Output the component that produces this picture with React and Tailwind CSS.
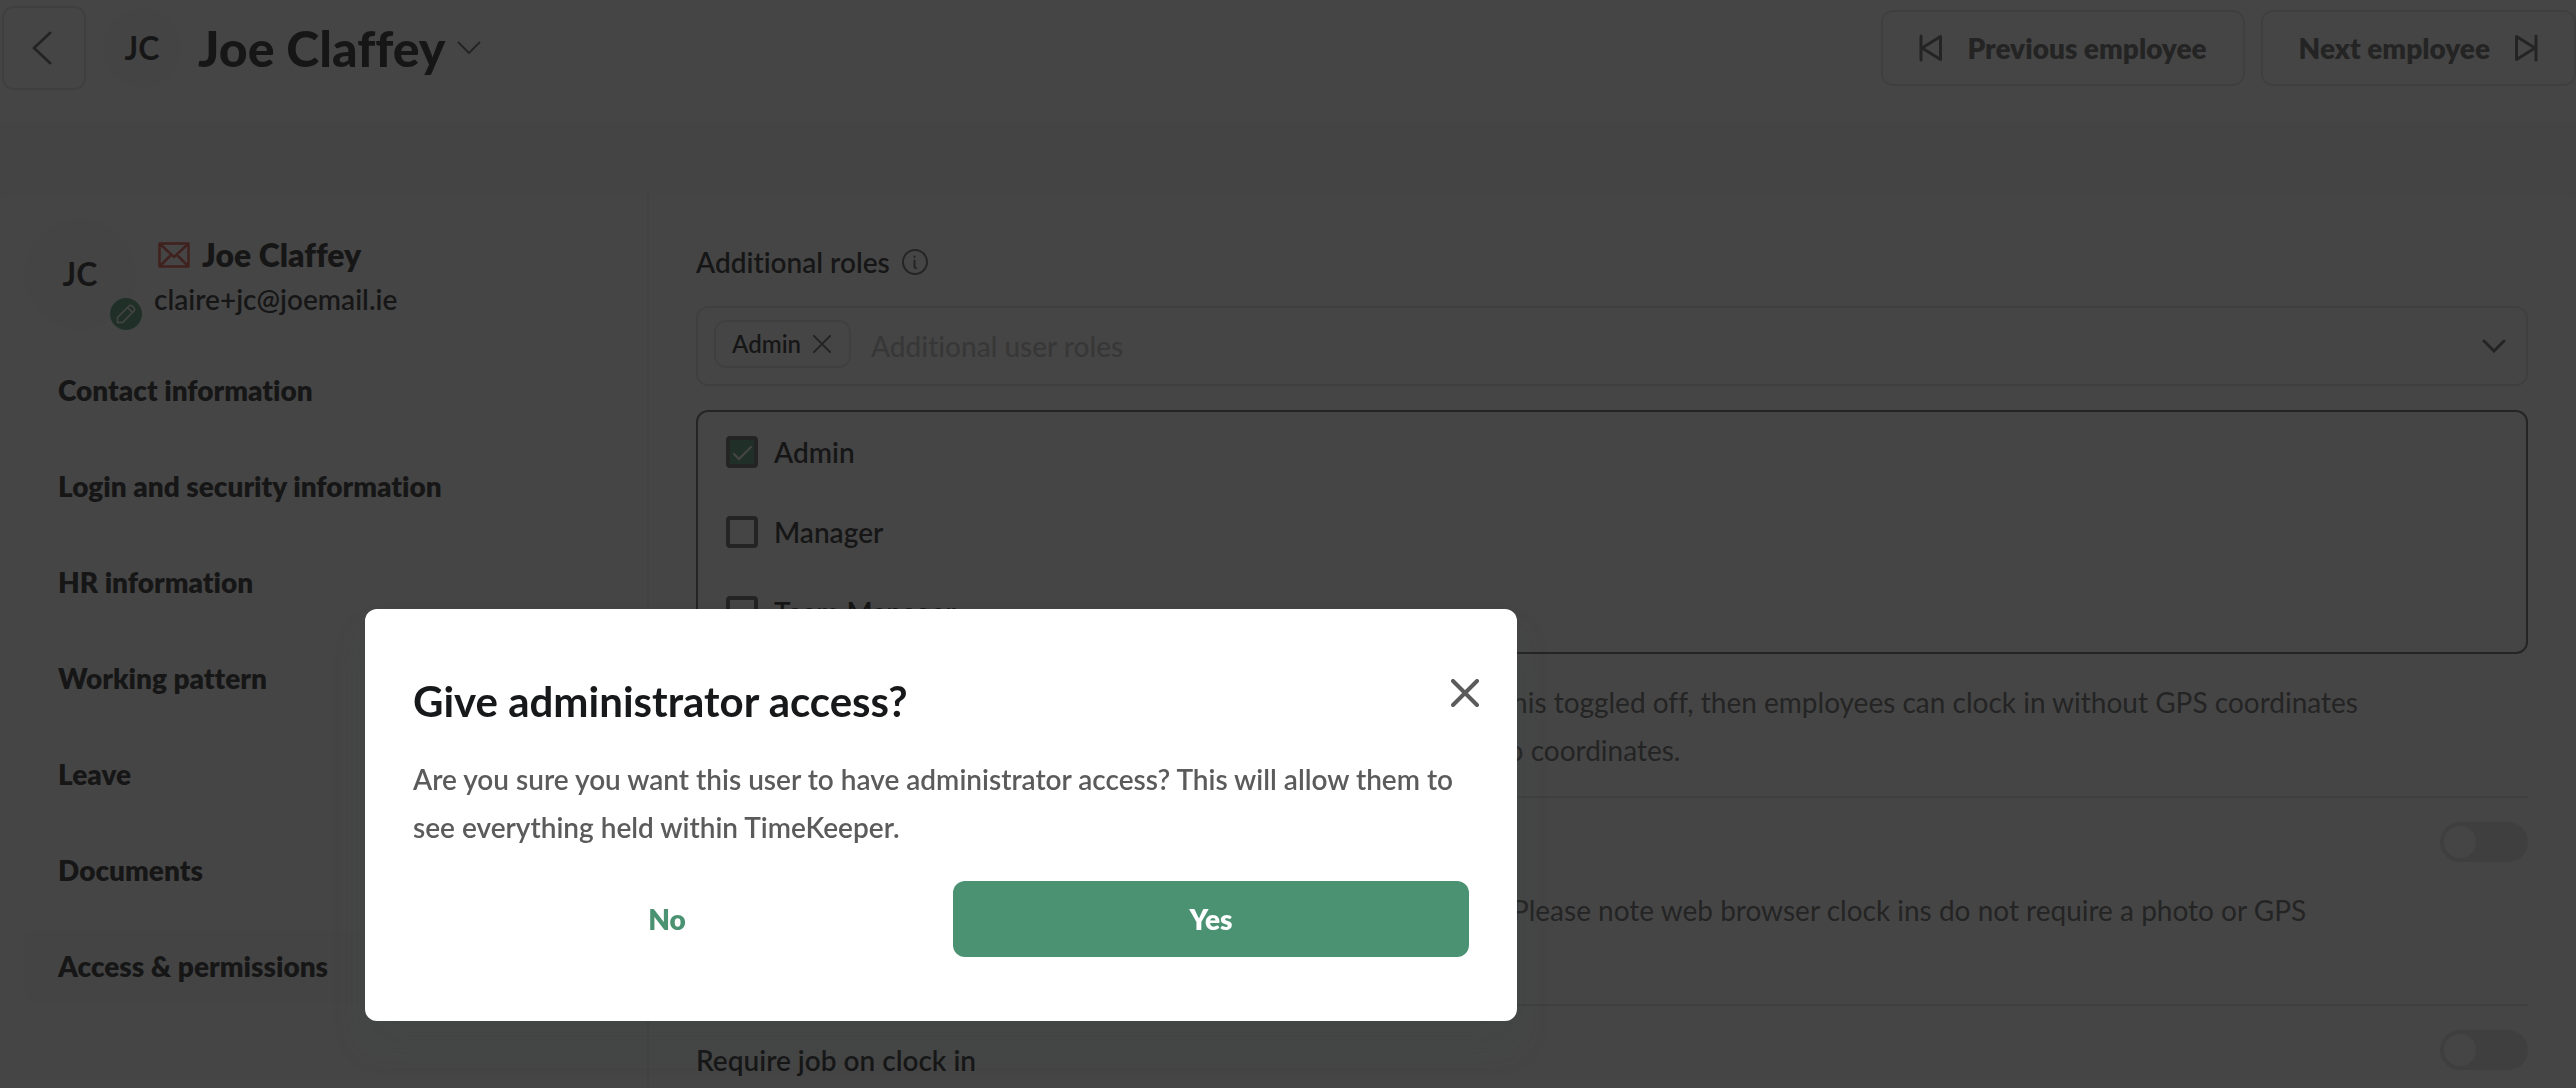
import React, { useState } from 'react';

const navItems = [
  'Contact information',
  'Login and security information',
  'HR information',
  'Working pattern',
  'Leave',
  'Documents',
  'Access & permissions',
];

const roles = ['Admin', 'Manager', 'Team Manager'];

function SkipIcon({ className }) {
  return (
    <svg className={className} width="24" height="28" viewBox="0 0 24 28" fill="none" stroke="currentColor" strokeWidth="3" strokeLinecap="round" strokeLinejoin="round">
      <path d="M2 2v24M21.500 2.500v23L3 14z" />
    </svg>
  );
}

function Header() {
  return (
    <header className="flex h-[123px] items-start justify-between bg-white pl-[2px]">
      <div className="flex items-center pt-[6px]">
        <button type="button" aria-label="Back" className="flex h-[84px] w-[84px] items-center justify-center rounded-xl border-2 border-[#e0e0e0] pr-1 text-[#5b5b5b]">
          <svg width="20" height="44" viewBox="0 0 20 44" fill="none" stroke="currentColor" strokeWidth="3" strokeLinecap="round" strokeLinejoin="round">
            <path d="M18 7L2 22l16 15" />
          </svg>
        </button>
        <div className="ml-4 flex size-20 items-center justify-center rounded-full bg-[#fafafa] text-[32px] font-bold">JC</div>
        <h1 className="ml-4 text-[50px] leading-[60px] font-black">Joe Claffey</h1>
        <button type="button" aria-label="Switch employee" className="ml-3 text-[#5b5b5b]">
          <svg width="24" height="14" viewBox="0 0 24 14" fill="none" stroke="currentColor" strokeWidth="2">
            <path d="M1 1l11 11L23 1" />
          </svg>
        </button>
      </div>
      <div className="flex gap-4 pt-[10px]">
        <button type="button" className="flex h-[76px] items-center gap-6 rounded-xl border-2 border-[#e0e0e0] px-9 font-extrabold text-[#5b5b5b]">
          <SkipIcon />
          Previous employee
        </button>
        <button type="button" className="flex h-[76px] items-center gap-6 rounded-xl border-2 border-[#e0e0e0] px-9 font-extrabold text-[#5b5b5b]">
          Next employee
          <SkipIcon className="rotate-180" />
        </button>
      </div>
    </header>
  );
}

function Sidebar() {
  return (
    <aside className="w-[649px] shrink-0 border-r-2 border-[#e8e8e8] px-6 pt-6">
      <div className="flex h-28 items-center">
        <div className="relative flex size-28 items-center justify-center rounded-full bg-[#fafafa] text-[32px] font-bold">
          JC
          <button type="button" aria-label="Edit photo" className="absolute right-[-6px] bottom-0 flex size-8 items-center justify-center rounded-full bg-[#4b9272] text-white">
            <svg width="20" height="20" viewBox="0 0 20 20" fill="none" stroke="currentColor" strokeWidth="1.500" strokeLinejoin="round">
              <path d="M1.500 18.500v-5L13 2q1.500-1.500 3 0l2 2q1.500 1.500 0 3L6.500 18.500zM11.500 3.500l5 5" />
            </svg>
          </button>
        </div>
        <div className="pt-[6px] pl-[18px]">
          <p className="flex items-center gap-3 pl-1 text-[32px] leading-[44px] font-extrabold">
            <svg width="32" height="26" viewBox="0 0 32 26" fill="none" stroke="#e04a3c" strokeWidth="2.500" strokeLinejoin="round">
              <path d="M1.500 1.500h29v23h-29zM2 2l14 13L30 2M2 24l11-11M30 24L19 13" />
            </svg>
            Joe Claffey
          </p>
          <p className="leading-[44px]">claire+jc@joemail.ie</p>
        </div>
      </div>
      <nav className="mt-6 flex flex-col gap-6 font-extrabold">
        {navItems.map((item) => (
          <a
            key={item}
            href="#"
            className={`flex h-[72px] items-center rounded-xl px-[34px] ${item === 'Access & permissions' ? 'bg-[#fafafa]' : ''}`}
          >
            {item}
          </a>
        ))}
      </nav>
    </aside>
  );
}

function Toggle({ label }) {
  return (
    <label className="relative block h-10 w-[88px] shrink-0">
      <input type="checkbox" role="switch" aria-label={label} className="peer size-full appearance-none rounded-full bg-[#e0e0e0]" />
      <span className="absolute top-1 left-1 size-8 rounded-full bg-white peer-checked:left-[52px]" />
    </label>
  );
}

function Permissions() {
  const [selected, setSelected] = useState(['Admin']);

  const toggleRole = (role) =>
    setSelected((prev) => (prev.includes(role) ? prev.filter((r) => r !== role) : [...prev, role]));

  return (
    <main className="flex-1 pt-11 pr-12 pl-[47px]">
      <div className="flex h-12 items-center gap-3">
        <label htmlFor="roles">Additional roles</label>
        <svg width="26" height="26" viewBox="0 0 26 26" fill="none" stroke="#5b5b5b" strokeWidth="2" strokeLinecap="round">
          <circle cx="13" cy="13" r="12" />
          <path d="M12.500 11.500v6q0 1.500 1.500 1.500M12.500 7.500v.5" />
        </svg>
      </div>

      {/* role picker */}
      <div className="mt-5 flex h-20 items-center rounded-xl border-2 border-[#e0e0e0] pr-5 pl-4">
        {selected.includes('Admin') && (
          <span className="mb-1 flex h-12 shrink-0 items-center gap-3 rounded-xl border-2 border-[#e0e0e0] pr-[18px] pl-4 text-2xl">
            Admin
            <button type="button" aria-label="Remove Admin" onClick={() => toggleRole('Admin')}>
              <svg width="18" height="18" viewBox="0 0 18 18" stroke="#5b5b5b" strokeWidth="2" strokeLinecap="round">
                <path d="M1 1l16 16M17 1L1 17" />
              </svg>
            </button>
          </span>
        )}
        <input id="roles" type="text" placeholder="Additional user roles" className="ml-5 min-w-0 flex-1 font-medium outline-none placeholder:text-[#b8b8b8]" />
        <button type="button" aria-label="Show roles">
          <svg width="24" height="14" viewBox="0 0 24 14" fill="none" stroke="#5b5b5b" strokeWidth="3" strokeLinecap="round">
            <path d="M2 2l10 10L22 2" />
          </svg>
        </button>
      </div>

      <div className="mt-6 h-[244px] overflow-hidden rounded-xl border-2 border-[#5b5b5b] px-7">
        {roles.map((role) => (
          <label key={role} className="flex h-20 items-center gap-4">
            <span className="relative block size-8">
              <input
                type="checkbox"
                checked={selected.includes(role)}
                onChange={() => toggleRole(role)}
                className="block size-8 appearance-none rounded-sm border-4 border-[#5b5b5b] checked:bg-[#4b9272]"
              />
              {selected.includes(role) && (
                <svg className="pointer-events-none absolute inset-0" width="32" height="32" viewBox="0 0 32 32" fill="none" stroke="#fff" strokeWidth="2" strokeLinecap="round">
                  <path d="M8 18l5 5L25 11" />
                </svg>
              )}
            </span>
            {role}
          </label>
        ))}
      </div>

      <section className="border-b-2 border-[#e0e0e0] pt-6 pb-[22px] leading-[48px] text-[#5b5b5b]">
        <p className="pl-[806px] font-normal whitespace-nowrap">this toggled off, then employees can clock in without GPS coordinates</p>
        <p className="pl-[796px] font-normal whitespace-nowrap">no coordinates.</p>
      </section>

      <section className="flex h-[208px] flex-col items-end border-b-2 border-[#e0e0e0] pt-6">
        <Toggle label="Require photo" />
        <p className="mt-6 w-full pl-[816px] leading-[48px] font-normal whitespace-nowrap text-[#5b5b5b]">
          Please note web browser clock ins do not require a photo or GPS
        </p>
      </section>

      <section className="flex items-start justify-between pt-6">
        <h2 className="pt-2 leading-[44px]">Require job on clock in</h2>
        <Toggle label="Require job on clock in" />
      </section>
    </main>
  );
}

function ConfirmModal({ onClose }) {
  return (
    <div className="fixed inset-0 flex items-start bg-[#171717]/80 pt-[609px] pl-[365px]">
      <div role="dialog" aria-modal="true" aria-labelledby="modal-title" className="relative h-[412px] w-[1152px] rounded-xl bg-white px-12 pt-16 shadow-[0_24px_32px_rgba(60,75,68,0.2)]">
        <button type="button" aria-label="Close" onClick={onClose} className="absolute top-[70px] right-[38px]">
          <svg width="28" height="28" viewBox="0 0 28 28" stroke="#5b5b5b" strokeWidth="4" strokeLinecap="round">
            <path d="M2 2l24 24M26 2L2 26" />
          </svg>
        </button>
        <h2 id="modal-title" className="text-[42px] leading-[56px] font-bold">
          Give administrator access?
        </h2>
        <p className="mt-[26px] leading-[48px] text-[#5b5b5b]">
          Are you sure you want this user to have administrator access? This will allow them to see everything held within TimeKeeper.
        </p>
        <div className="mt-[30px] flex gap-8 font-extrabold">
          <button type="button" onClick={onClose} className="h-[76px] flex-1 rounded-xl text-[#4b9272]">
            No
          </button>
          <button type="button" onClick={onClose} className="h-[76px] w-[516px] rounded-xl bg-[#4b9272] text-white">
            Yes
          </button>
        </div>
      </div>
    </div>
  );
}

export default function App() {
  const [open, setOpen] = useState(true);

  return (
    <div className="h-screen overflow-hidden bg-[#f7f7f7] font-['Lato',sans-serif] text-[28px] font-semibold text-[#171819] [font-variant-ligatures:no-common-ligatures]">
      <Header />
      <div className="mt-[71px] flex min-h-screen rounded-t-xl bg-white">
        <Sidebar />
        <Permissions />
      </div>
      {open && <ConfirmModal onClose={() => setOpen(false)} />}
    </div>
  );
}
